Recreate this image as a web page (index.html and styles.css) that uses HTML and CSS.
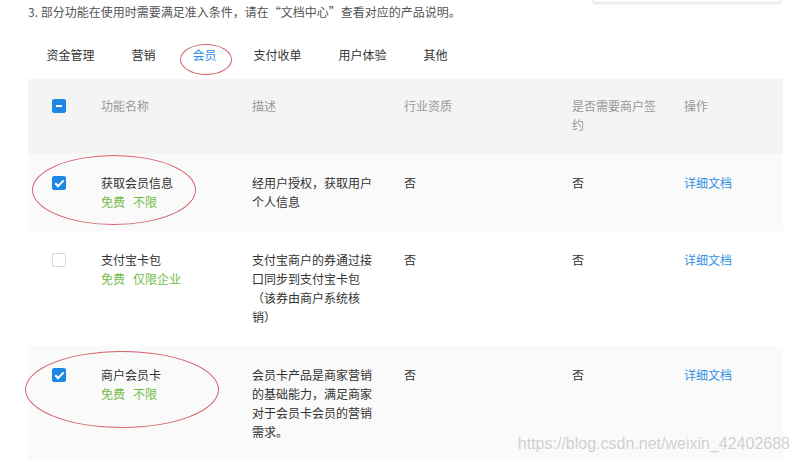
FILE: index.html
```html
<!DOCTYPE html>
<html lang="zh-CN">
<head>
    <meta charset="UTF-8">
    <title>功能列表</title>
    <link rel="stylesheet" href="styles.css">
</head>
<body>
    <div class="page">
        <div class="search-box"></div>
        <p class="notice">3. 部分功能在使用时需要满足准入条件，请在“文档中心”查看对应的产品说明。</p>

        <div class="tabs">
            <div class="tab">资金管理</div>
            <div class="tab">营销</div>
            <div class="tab active">会员<span class="mark mark-tab"></span></div>
            <div class="tab">支付收单</div>
            <div class="tab">用户体验</div>
            <div class="tab">其他</div>
        </div>

        <div class="table">
            <div class="row head">
                <div class="cell check"><span class="cb cb-on cb-part"></span></div>
                <div class="cell">功能名称</div>
                <div class="cell">描述</div>
                <div class="cell">行业资质</div>
                <div class="cell">是否需要商户签约</div>
                <div class="cell">操作</div>
            </div>

            <div class="row odd">
                <span class="mark mark-row1"></span>
                <div class="cell check"><span class="cb cb-on"></span></div>
                <div class="cell">
                    <div>获取会员信息</div>
                    <div class="tags"><span>免费</span><span>不限</span></div>
                </div>
                <div class="cell">经用户授权，获取用户个人信息</div>
                <div class="cell">否</div>
                <div class="cell">否</div>
                <div class="cell"><a class="link" href="#">详细文档</a></div>
            </div>

            <div class="row">
                <div class="cell check"><span class="cb"></span></div>
                <div class="cell">
                    <div>支付宝卡包</div>
                    <div class="tags"><span>免费</span><span>仅限企业</span></div>
                </div>
                <div class="cell">支付宝商户的券通过接口同步到支付宝卡包（该券由商户系统核销）</div>
                <div class="cell">否</div>
                <div class="cell">否</div>
                <div class="cell"><a class="link" href="#">详细文档</a></div>
            </div>

            <div class="row odd">
                <span class="mark mark-row3"></span>
                <div class="cell check"><span class="cb cb-on"></span></div>
                <div class="cell">
                    <div>商户会员卡</div>
                    <div class="tags"><span>免费</span><span>不限</span></div>
                </div>
                <div class="cell">会员卡产品是商家营销的基础能力，满足商家对于会员卡会员的营销需求。</div>
                <div class="cell">否</div>
                <div class="cell">否</div>
                <div class="cell"><a class="link" href="#">详细文档</a></div>
            </div>
        </div>

        <div class="watermark">https://blog.csdn.net/weixin_42402688</div>
    </div>
</body>
</html>
```

FILE: styles.css
```css
* {
    margin: 0;
    padding: 0;
    box-sizing: border-box;
}
body {
    background: #fff;
    font-family: "Noto Sans CJK SC", "Noto Sans", sans-serif;
    font-size: 12px;
    color: #333;
    overflow: hidden;
    text-spacing-trim: space-all;
}
.page {
    position: relative;
    width: 800px;
    height: 461px;
    padding: 0 17px 0 28px;
    overflow: hidden;
}
.search-box {
    position: absolute;
    top: -28px;
    left: 592px;
    width: 190px;
    height: 31px;
    border: 1px solid #e3e3e3;
    border-radius: 3px;
    box-shadow: 0 1px 3px rgba(0, 0, 0, 0.08);
}
.notice {
    padding-top: 3px;
    line-height: 17px;
    color: #555;
}
.tabs {
    display: flex;
    padding: 25px 0 14px;
    line-height: 20px;
}
.tab {
    position: relative;
    padding: 0 18.5px;
    color: #333;
}
.tab.active {
    color: #2f8fe6;
}
.mark {
    position: absolute;
    border: 1px solid #d4616b;
    border-radius: 50%;
    pointer-events: none;
}
.mark-tab {
    left: 6px;
    top: -1px;
    width: 52px;
    height: 31px;
}
.mark-row1 {
    left: 4px;
    top: 1px;
    width: 164px;
    height: 70px;
}
.mark-row3 {
    left: -3px;
    top: 5px;
    width: 194px;
    height: 77px;
}
.table {
    width: 755px;
}
.row {
    position: relative;
    display: grid;
    grid-template-columns: 73px 151px 152px 168px 112px 1fr;
    line-height: 19px;
}
.row.head {
    background: #f4f4f4;
    color: #999;
}
.row.odd {
    background: #fafafa;
}
.cell {
    padding: 19px 24px 20px 0;
    text-spacing-trim: space-all;
}
.head .cell {
    padding-top: 17px;
}
.check {
    padding-left: 24px;
}
.cb {
    display: block;
    width: 14px;
    height: 14px;
    margin-top: 3px;
    border: 1px solid #d9d9d9;
    border-radius: 2px;
    background: #fff;
    position: relative;
}
.cb-on {
    background: #1e88e5;
    border-color: #1e88e5;
}
.cb-on::after {
    content: "";
    position: absolute;
    left: 4px;
    top: 1px;
    width: 3px;
    height: 7px;
    border: solid #fff;
    border-width: 0 2px 2px 0;
    transform: rotate(45deg);
}
.cb-part::after {
    left: 3px;
    top: 5px;
    width: 6px;
    height: 0;
    border-width: 0 0 2px 0;
    transform: none;
}
.tags span {
    color: #74bd4b;
    margin-right: 8px;
}
.link {
    color: #2f8fe6;
    text-decoration: none;
}
.watermark {
    position: absolute;
    right: 10px;
    bottom: 8px;
    font-family: "Liberation Sans", Arial, sans-serif;
    font-size: 16px;
    color: rgba(170, 170, 170, 0.55);
}
```
